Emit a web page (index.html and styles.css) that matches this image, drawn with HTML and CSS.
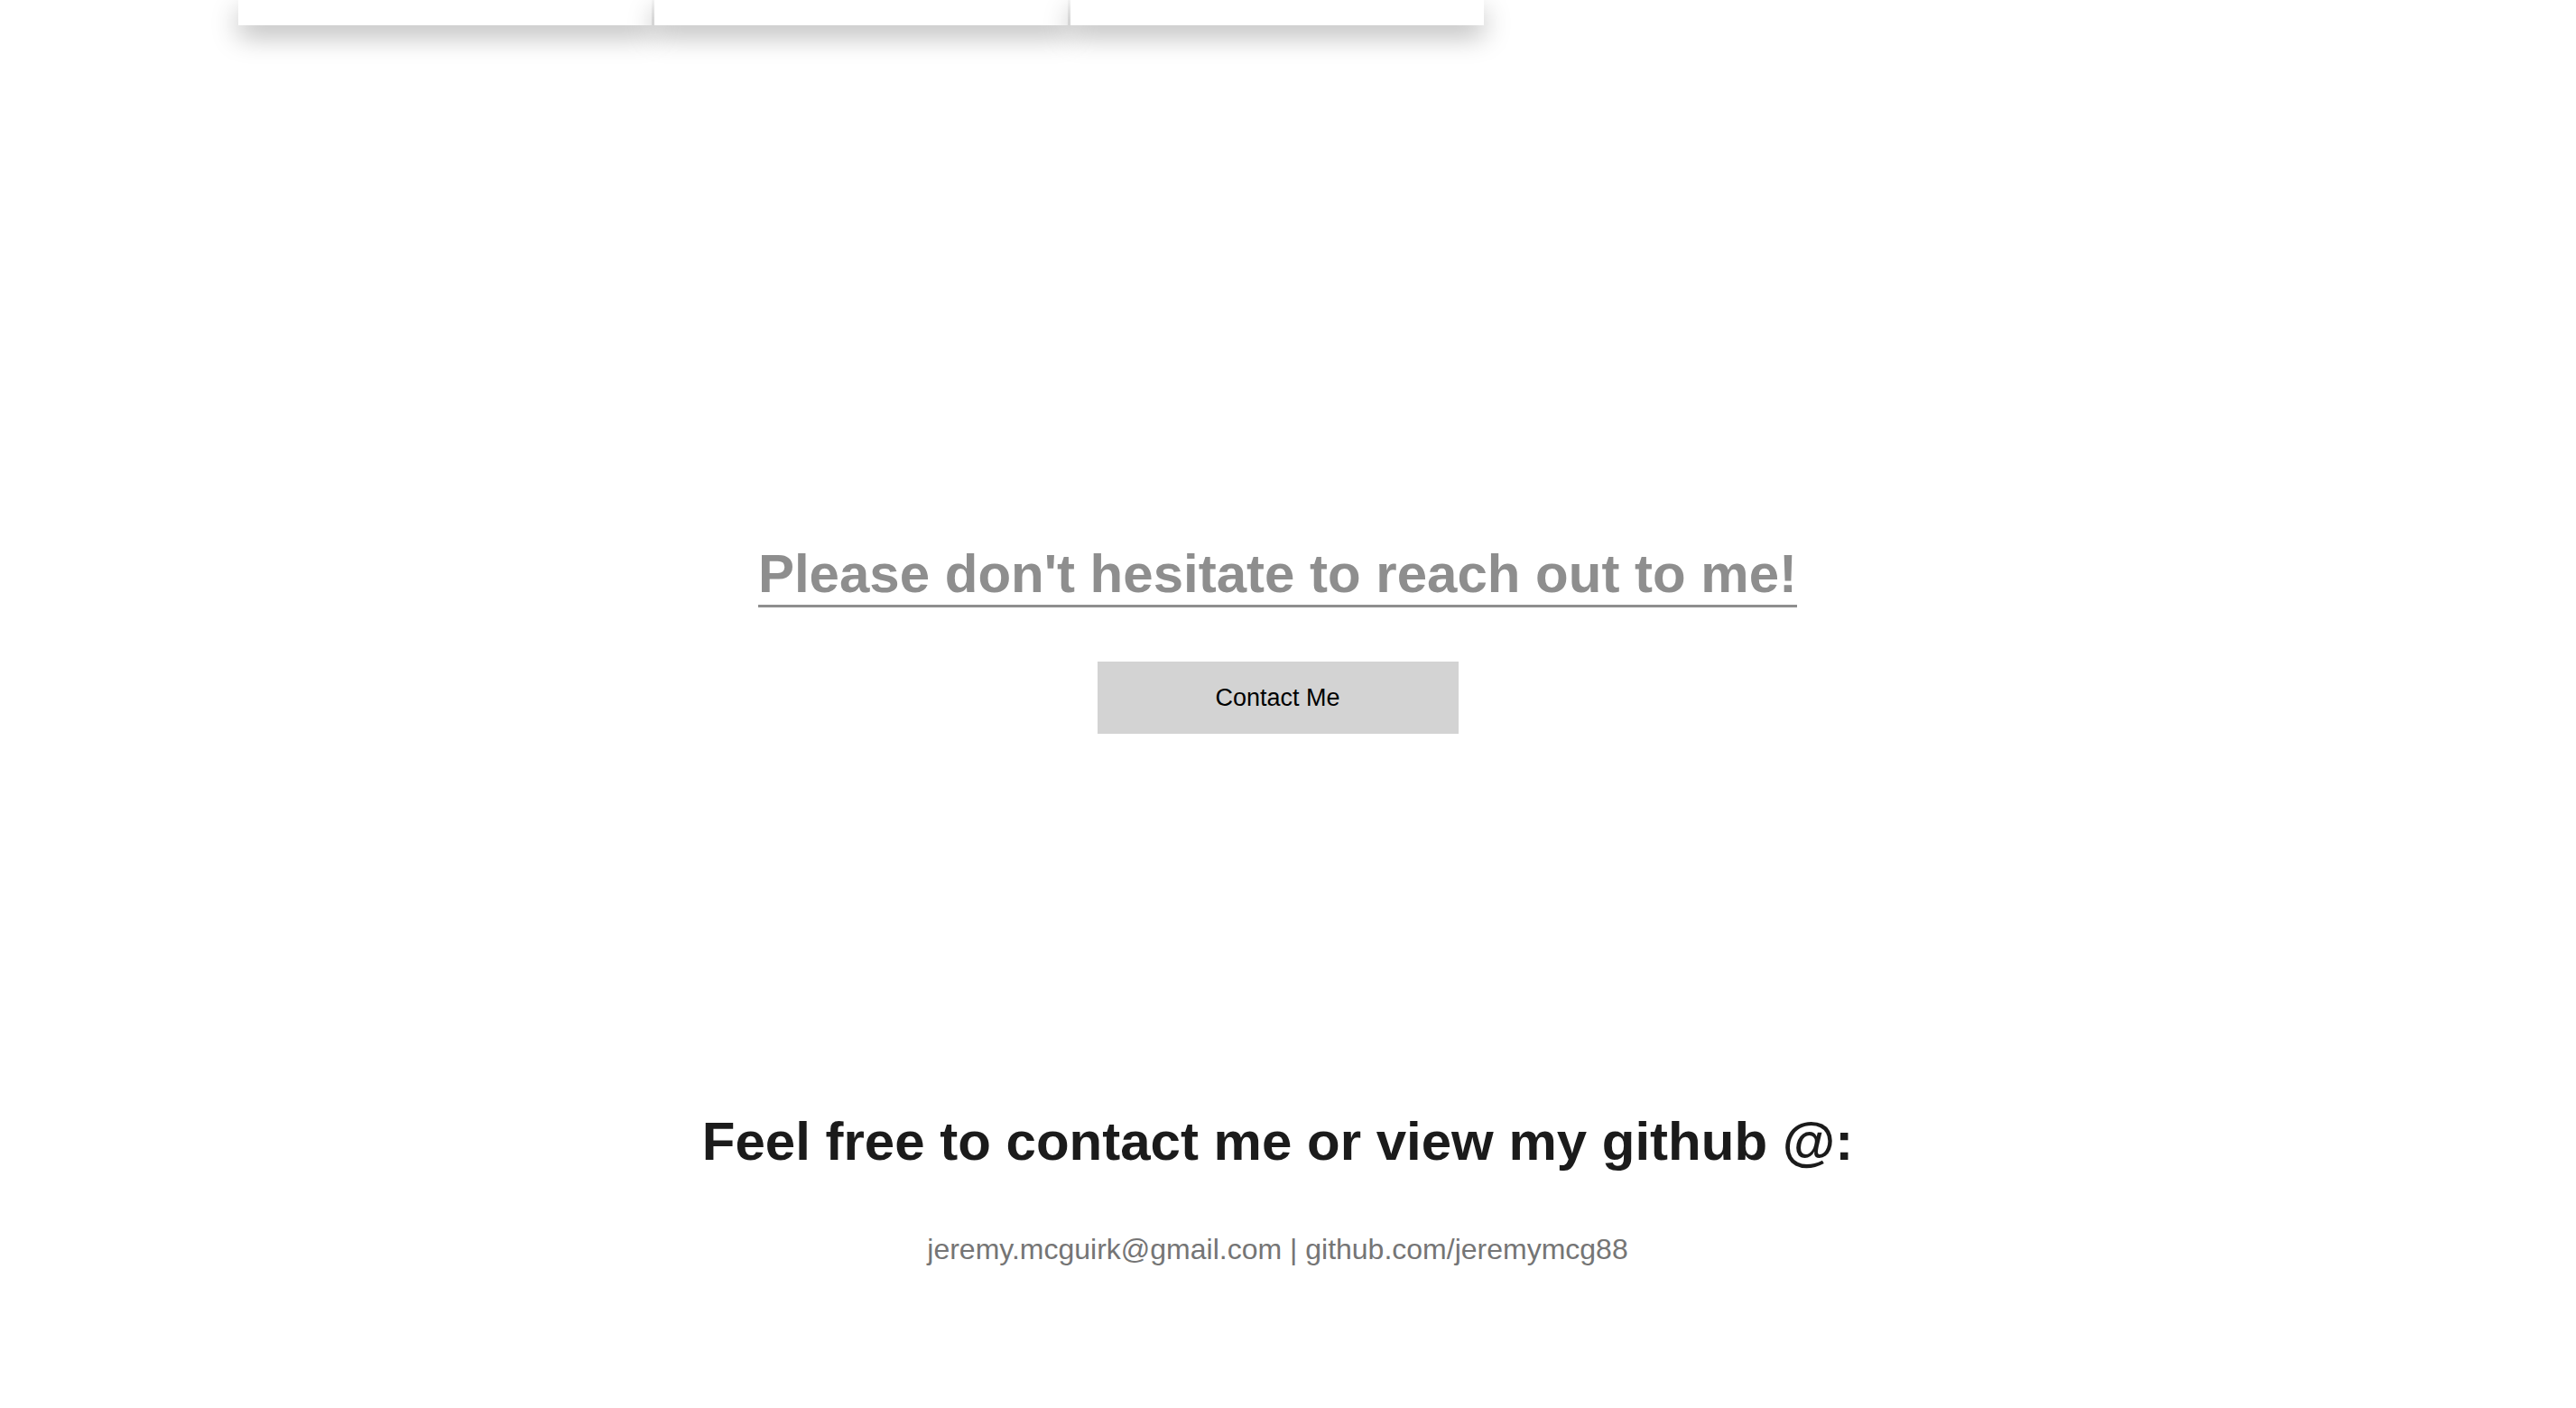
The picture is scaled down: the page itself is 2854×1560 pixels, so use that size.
FILE: index.html
```html
<!DOCTYPE html>
<html lang="en">
<head>
<meta charset="utf-8">
<title>Contact</title>
<link rel="stylesheet" href="styles.css">
</head>
<body>
  <section class="projects">
    <div class="card"></div>
    <div class="card"></div>
    <div class="card"></div>
  </section>

  <section class="reach">
    <h2 class="reach-title">Please don't hesitate to reach out to me!</h2>
    <button class="contact-btn" type="button">Contact Me</button>
  </section>

  <footer class="footer">
    <h2 class="footer-title">Feel free to contact me or view my github @:</h2>
    <p class="footer-links">jeremy.mcguirk@gmail.com | github.com/jeremymcg88</p>
  </footer>
</body>
</html>
```

FILE: styles.css
```css
html, body {
  margin: 0;
  padding: 0;
  background: #ffffff;
}

body {
  font-family: "Liberation Sans", Helvetica, Arial, sans-serif;
  width: 2854px;
  height: 1560px;
  overflow: hidden;
}

.projects {
  display: flex;
  gap: 3px;
  padding-left: 264px;
}

.card {
  width: 458px;
  height: 28px;
  background: #ffffff;
  box-shadow: 0 12px 30px rgba(0, 0, 0, 0.28);
}

.reach {
  display: flex;
  flex-direction: column;
  align-items: center;
  padding-right: 23px;
  padding-top: 573px;
}

.reach-title {
  display: inline-block;
  margin: 0;
  font-size: 60px;
  line-height: 69px;
  font-weight: 700;
  color: #8e8e8e;
  border-bottom: 3px solid #8e8e8e;
}

.contact-btn {
  margin-top: 60px;
  width: 400px;
  height: 80px;
  border: none;
  background: #d3d3d3;
  color: #000000;
  font-family: "Liberation Sans", Helvetica, Arial, sans-serif;
  font-size: 27px;
  padding: 0;
}

.footer {
  display: flex;
  flex-direction: column;
  align-items: center;
  padding-right: 23px;
  padding-top: 417px;
}

.footer-title {
  margin: 0;
  font-size: 60px;
  line-height: 69px;
  font-weight: 700;
  color: #1b1b1b;
}

.footer-links {
  margin: 67px 0 0;
  font-size: 32px;
  line-height: 37px;
  color: #757575;
}
```
